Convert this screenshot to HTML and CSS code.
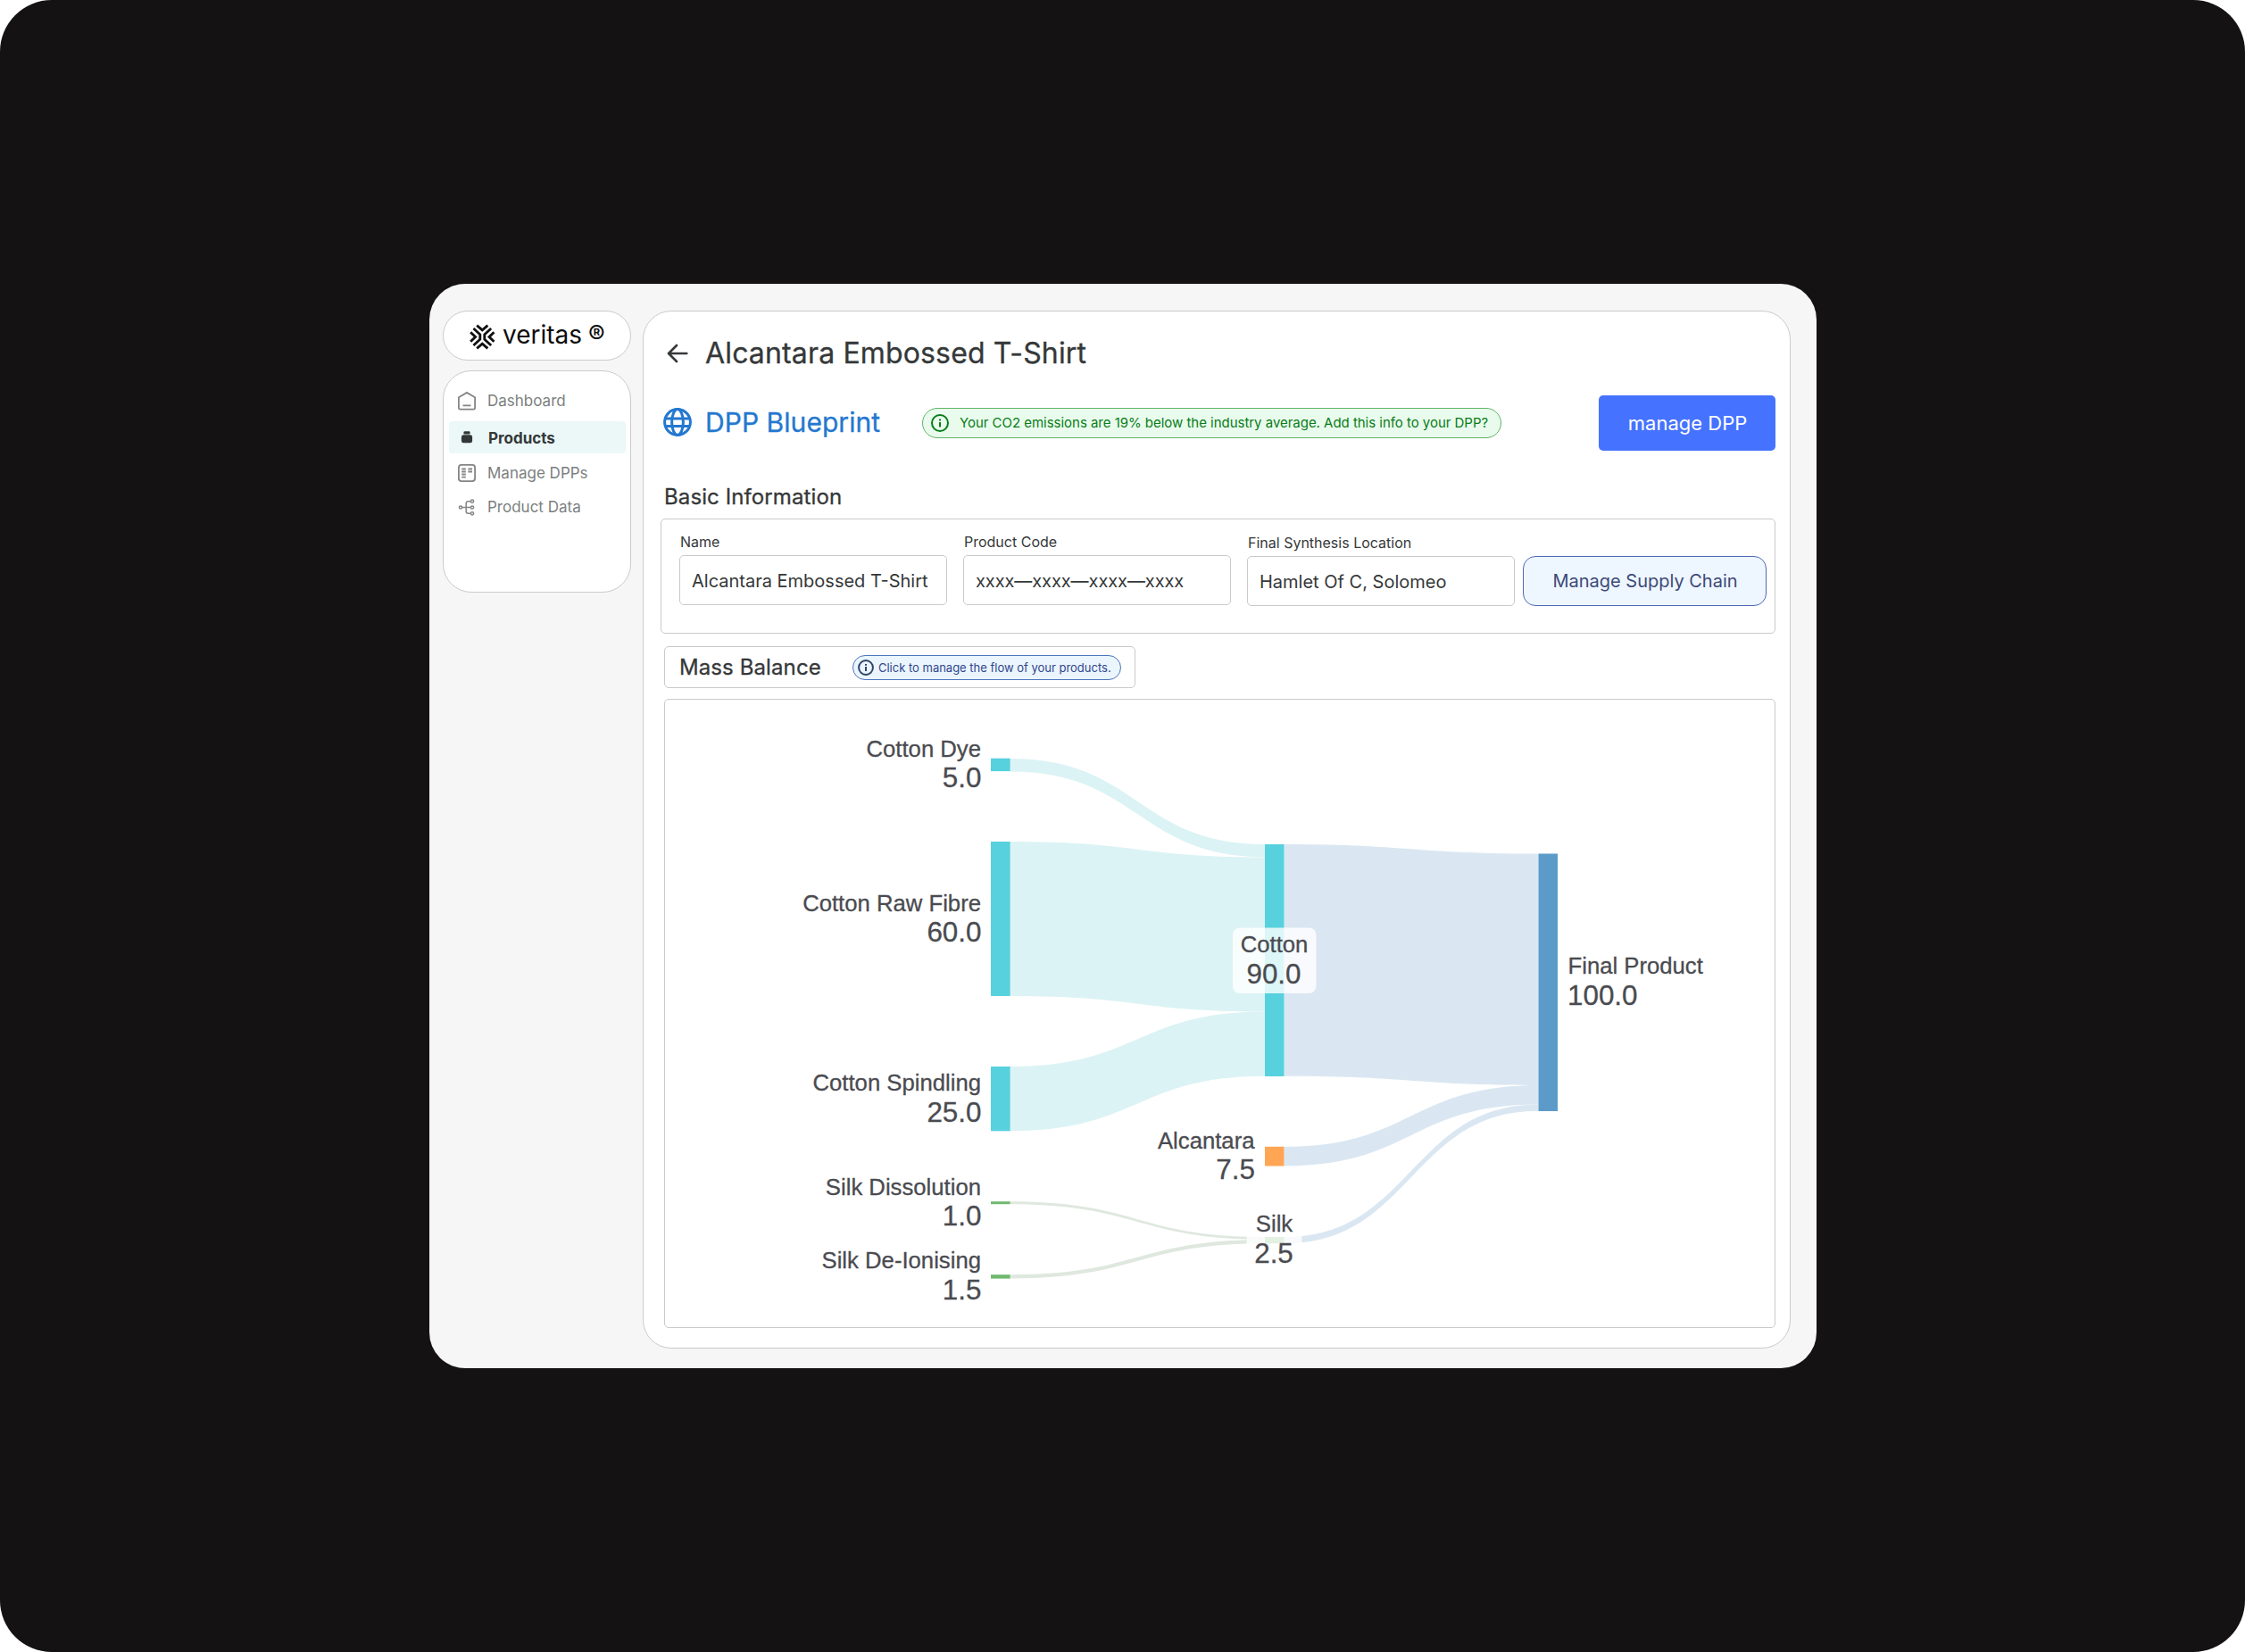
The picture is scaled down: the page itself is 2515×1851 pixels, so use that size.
FILE: index.html
```html
<!DOCTYPE html>
<html lang="en">
<head>
<meta charset="utf-8">
<title>Alcantara Embossed T-Shirt – Veritas</title>
<link rel="stylesheet" href="styles.css">
</head>
<body>
<div class="canvas">
<div class="app">
  <aside class="sidebar">
    <div class="brand">
      <svg class="brand-mark" viewBox="0 0 30 30" fill="none" stroke="#111" stroke-width="3">
        <path d="M8.500 1.600L14.800 7l6.300-5.400M8.500 28.400L14.800 23l6.300 5.400"/>
        <path d="M4.600 5.200l7.600 7v5.600l-7.600 7M25 5.200l-7.600 7v5.600l7.600 7"/>
        <path d="M1.200 9.600l5.600 5.400-5.600 5.400M28.400 9.600L22.800 15l5.600 5.400"/>
      </svg>
      <span class="brand-name">veritas</span>
      <span class="brand-reg">®</span>
    </div>
    <nav class="nav">
      <a class="nav-item">
        <svg viewBox="0 0 24 24" fill="none" stroke="#858585" stroke-width="1.800"><path d="M2.900 8.200L12 2.900l9.100 5.300v11.600q0 1.800-1.800 1.800H4.700q-1.800 0-1.800-1.800zM7.500 17.300h9"/></svg>
        <span>Dashboard</span>
      </a>
      <a class="nav-item active">
        <svg viewBox="0 0 24 24" fill="#333637"><rect x="8.400" y="5.200" width="7.200" height="3.400" rx="1.300"/><rect x="5.900" y="9.300" width="12.200" height="9" rx="2.400"/></svg>
        <span>Products</span>
      </a>
      <a class="nav-item">
        <svg viewBox="0 0 24 24" fill="none" stroke="#858585" stroke-width="1.800"><rect x="2.900" y="2.900" width="18.200" height="18.200" rx="3"/><path d="M6.200 7.500h4.600M6.200 10.500h4.600M6.200 13.500h4.600M6.200 16.700h4.600M13.400 7.500H18M13.400 10.500H18"/></svg>
        <span>Manage DPPs</span>
      </a>
      <a class="nav-item">
        <svg viewBox="0 0 24 24" fill="none" stroke="#858585" stroke-width="1.500"><circle cx="5" cy="12.500" r="1.600"/><circle cx="18" cy="5.700" r="1.600"/><circle cx="18" cy="12.500" r="1.600"/><circle cx="18" cy="19.300" r="1.600"/><path d="M6.600 12.500h9.800M16.400 5.700h-3q-2.200 0-2.200 2.200v9.200q0 2.200 2.200 2.200h3"/></svg>
        <span>Product Data</span>
      </a>
    </nav>
  </aside>
  <main class="panel">
    <header class="title-row">
      <svg class="back" viewBox="0 0 24 22" fill="none" stroke="#353839" stroke-width="2.600" stroke-linecap="round" stroke-linejoin="round"><path d="M22.300 11H2.200M11 2L2 11l9 9"/></svg>
      <h1>Alcantara Embossed T-Shirt</h1>
    </header>
    <div class="blueprint-row">
      <svg class="globe" viewBox="0 0 32 32" fill="none" stroke="#2478cf" stroke-width="3"><circle cx="16" cy="16" r="14.400"/><ellipse cx="16" cy="16" rx="6.400" ry="14.400"/><path d="M2.500 12h27M2.500 20.500h27"/></svg>
      <h2>DPP Blueprint</h2>
      <div class="notice">
        <svg viewBox="0 0 20 20" fill="none" stroke="#0a7d18" stroke-width="2"><circle cx="10" cy="10" r="9"/><path d="M10 9v5.500M10 5.500v2"/></svg>
        <span>Your CO2 emissions are 19% below the industry average. Add this info to your DPP?</span>
      </div>
      <button class="primary">manage DPP</button>
    </div>
    <h3>Basic Information</h3>
    <section class="info">
      <div class="field"><div class="label">Name</div><div class="input">Alcantara Embossed T-Shirt</div></div>
      <div class="field"><div class="label">Product Code</div><div class="input code">xxxx—xxxx—xxxx—xxxx</div></div>
      <div class="field low"><div class="label">Final Synthesis Location</div><div class="input">Hamlet Of C, Solomeo</div></div>
      <button class="secondary">Manage Supply Chain</button>
    </section>
    <section class="mass">
      <h3>Mass Balance</h3>
      <div class="hint">
        <svg viewBox="0 0 20 20" fill="none" stroke="#2f4468" stroke-width="2.200"><circle cx="10" cy="10" r="8.800"/><path d="M10 9v5.500M10 5.500v2"/></svg>
        <span>Click to manage the flow of your products.</span>
      </div>
    </section>
    <section class="chart">
      <svg viewBox="745 784.5 1243 702">
        <g class="flow-teal">
          <path d="M1132 850C1274.500 850 1274.500 946 1417 946V960.400C1274.500 960.400 1274.500 864.400 1132 864.400z"/>
          <path d="M1132 943C1274.500 943 1274.500 960.400 1417 960.400V1133.400C1274.500 1133.400 1274.500 1116 1132 1116z"/>
          <path d="M1132 1195C1274.500 1195 1274.500 1133.400 1417 1133.400V1205.700C1274.500 1205.700 1274.500 1267.300 1132 1267.300z"/>
        </g>
        <g class="flow-green">
          <path d="M1132 1346.300C1274.500 1346.300 1274.500 1386 1417 1386V1388.900C1274.500 1388.900 1274.500 1349.200 1132 1349.200z"/>
          <path d="M1132 1428.200C1274.500 1428.200 1274.500 1388.900 1417 1388.900V1393.200C1274.500 1393.200 1274.500 1432.500 1132 1432.500z"/>
        </g>
        <g class="flow-blue">
          <path d="M1438.500 946C1581 946 1581 956.500 1723.500 956.500V1216C1581 1216 1581 1205.700 1438.500 1205.700z"/>
          <path d="M1438.500 1284.800C1581 1284.800 1581 1216 1723.500 1216V1237.600C1581 1237.600 1581 1306.400 1438.500 1306.400z"/>
          <path d="M1438.500 1386C1581 1386 1581 1237.600 1723.500 1237.600V1244.800C1581 1244.800 1581 1393.200 1438.500 1393.200z"/>
        </g>
        <g fill="#56d1dd">
          <rect x="1110" y="849.700" width="21.700" height="14.400"/>
          <rect x="1110" y="943" width="21.700" height="173"/>
          <rect x="1110" y="1195" width="21.700" height="72.300"/>
          <rect x="1417" y="946" width="21.500" height="260"/>
        </g>
        <g fill="#6fb96f">
          <rect x="1110" y="1346.200" width="21.700" height="3"/>
          <rect x="1110" y="1428.200" width="21.700" height="4.400"/>
          <rect x="1417" y="1386" width="21.500" height="7.200"/>
        </g>
        <rect x="1417" y="1284.800" width="21.500" height="21.700" fill="#ffa554"/>
        <rect x="1723.500" y="956.500" width="21.500" height="288.500" fill="#5c9bc9"/>
        <rect class="plate" x="1381" y="1039.500" width="93.500" height="73.500" rx="8"/>
        <rect class="plate" x="1396.500" y="1352.500" width="62" height="73.500" rx="8"/>
        <g class="names" text-anchor="end">
          <text x="1099" y="848">Cotton Dye</text>
          <text x="1099" y="1021">Cotton Raw Fibre</text>
          <text x="1099" y="1222.300">Cotton Spindling</text>
          <text x="1099" y="1339">Silk Dissolution</text>
          <text x="1099" y="1421">Silk De-Ionising</text>
          <text x="1405.500" y="1287">Alcantara</text>
        </g>
        <g class="values" text-anchor="end">
          <text x="1099.500" y="882">5.0</text>
          <text x="1099.500" y="1055">60.0</text>
          <text x="1099.500" y="1257">25.0</text>
          <text x="1099.500" y="1373">1.0</text>
          <text x="1099.500" y="1455.600">1.5</text>
          <text x="1406" y="1321.300">7.5</text>
        </g>
        <g class="names" text-anchor="middle"><text x="1427.500" y="1067">Cotton</text><text x="1427.500" y="1380">Silk</text></g>
        <g class="values" text-anchor="middle"><text x="1427" y="1102">90.0</text><text x="1427" y="1414.500">2.5</text></g>
        <g class="names"><text x="1756.500" y="1091">Final Product</text></g>
        <g class="values"><text x="1756" y="1126">100.0</text></g>
      </svg>
    </section>
  </main>
</div>
</div>
</body>
</html>
```
FILE: styles.css
```css
*{box-sizing:border-box}
body{margin:0;background:#fff;font-family:Inter,"Liberation Sans",sans-serif;color:#353839}
h1,h2,h3{margin:0;font-weight:400;white-space:nowrap;-webkit-text-stroke:.3px currentColor}
svg{display:block;flex:none}
span,.label,.input{white-space:nowrap}
button{font-family:inherit;padding:0;margin:0;flex:none}

.canvas{width:2515px;height:1851px;background:#141213;border-radius:58px;padding:318px 480px 318px 481px}
.app{height:1215px;background:#f6f6f6;border-radius:40px;padding:30px 29px 22px 15px;display:flex;gap:13px}

/* Sidebar */
.sidebar{width:211px;flex:none}
.brand{height:56px;border:1px solid #c8cccb;border-radius:28px;background:#fff;display:flex;align-items:center;padding-left:29px;color:#0d0d0d}
.brand-mark{width:29px;height:29px;margin-top:3px}
.brand-name{font-size:28px;line-height:34px;margin-left:8px;margin-top:-3px}
.brand-reg{font-size:28px;line-height:28px;font-weight:500;margin-left:7px;margin-top:-2px}
.nav{margin-top:11px;height:249px;border:1px solid #c8cccb;border-radius:32px;background:#fff;padding:15px 5px 0 6px;font-size:17px;line-height:20px;color:#7c7f7f}
.nav-item{display:flex;align-items:center;height:36px;padding-left:8px;gap:11px;margin-bottom:4px}
.nav-item svg{width:24px;height:24px}
.nav-item:nth-child(3){margin-bottom:2px}
.nav-item.active{background:#ebf8f7;border-radius:4px;color:#353839;font-weight:700;gap:12px;margin-top:5px}
.nav-item.active span{padding-top:2px}

/* Main panel */
.panel{flex:1;border:1px solid #c8cccb;border-radius:32px;background:#fff;padding:26px 16px 0 23px;min-width:0}
.title-row{display:flex;align-items:center;height:41px}
.back{width:24px;height:22px;margin-left:3px}
h1{font-size:32px;line-height:40px;letter-spacing:.15px;margin-left:19px}
.blueprint-row{display:flex;align-items:center;height:62px;margin-top:27px}
.globe{width:32px;height:32px;margin:-2px 0 0 -1px}
h2{font-size:30px;line-height:36px;letter-spacing:.05px;color:#2478cf;margin:-2px 0 0 15px;width:243px}
.notice{width:649px;height:34px;border:1px solid #5fb567;border-radius:17px;background:#e9fbed;color:#0a7d18;display:flex;align-items:center;padding-left:9px;font-size:15px;line-height:18px;letter-spacing:-.03px}
.notice svg{width:20px;height:20px;margin-right:12px}
.primary{width:198px;height:62px;margin-left:auto;border:0;border-radius:5px;background:#4573ff;color:#fff;font-size:22px;padding-left:1px}
h3{font-size:24px;line-height:30px;letter-spacing:.1px}
.panel>h3{margin-top:37px}

.info{margin:9px 0 0 -4px;width:1249px;height:129px;border:1px solid #c8cacb;border-radius:5px;padding:15px 0 0 20px;display:flex;align-items:flex-start}
.field{width:300px;margin-right:18px}
.field.low{margin:1px 9px 0 0}
.label{font-size:16px;line-height:20px;padding-left:1px}
.input{margin-top:5px;height:56px;border:1px solid #c8cacb;border-radius:5px;font-size:20px;line-height:56px;padding-left:13px}
.input.code{letter-spacing:-.08px}
.secondary{width:273px;height:56px;margin-top:26px;border:1px solid #5069b5;border-radius:14px;background:#eef6ff;color:#3d4a76;font-size:20px;padding-left:1px}

.mass{margin-top:14px;width:528px;height:47px;border:1px solid #c8cacb;border-radius:5px;display:flex;align-items:center;padding-left:16px}
.mass h3{width:194px}
.hint{width:301px;height:28px;border:1px solid #4d74bd;border-radius:14px;background:#ebf5fd;color:#31478d;display:flex;align-items:center;padding-left:5px;font-size:13px;line-height:16px;letter-spacing:-.01px}
.hint svg{width:18px;height:18px;margin-right:5px}

.chart{margin-top:12px;width:1245px;height:705px;border:1px solid #c8cacb;border-radius:5px}
.chart svg{width:1243px;height:703px}
.chart text{font-family:"Liberation Sans",Arial,sans-serif;fill:#4a4b50;stroke:#4a4b50;stroke-width:.3}
.names text{font-size:25.7px}
.values text{font-size:31.4px}
.flow-teal{fill:#dcf3f5}
.flow-green{fill:#dfe8df}
.flow-blue{fill:#dae7f2}
.plate{fill:#fff;fill-opacity:.8}
```
